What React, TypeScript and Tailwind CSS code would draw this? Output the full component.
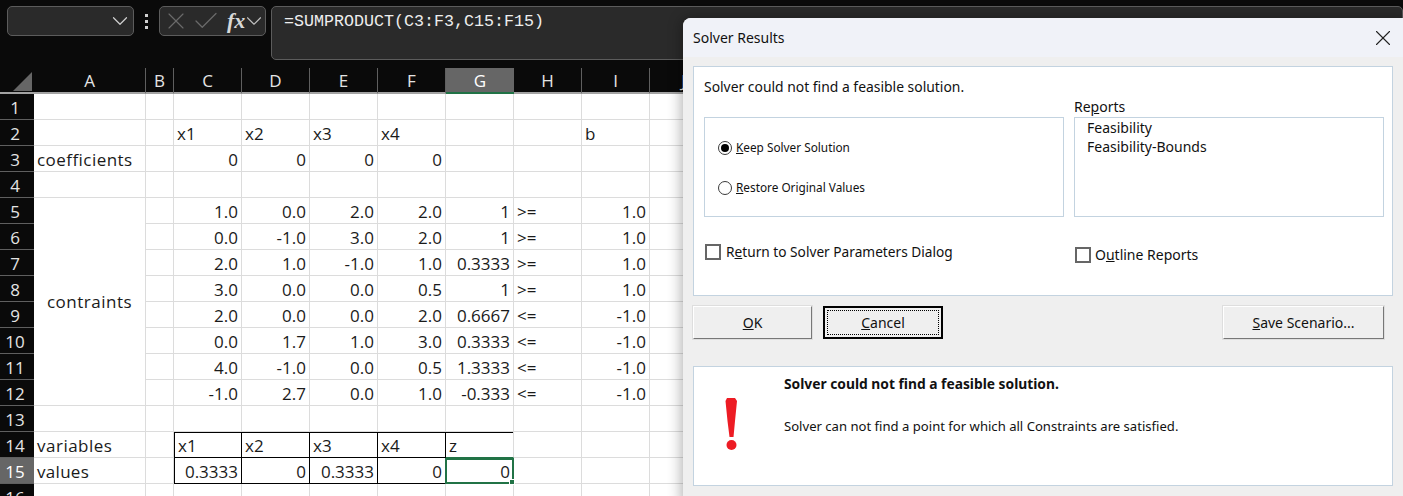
import React from 'react';
import { Check, ChevronDown, X } from 'lucide-react';

const columns = ['A', 'B', 'C', 'D', 'E', 'F', 'G', 'H', 'I', 'J'];

// constraint rows: C..G values, sign, b
const constraints = [
  ['1.0', '0.0', '2.0', '2.0', '1', '>=', '1.0'],
  ['0.0', '-1.0', '3.0', '2.0', '1', '>=', '1.0'],
  ['2.0', '1.0', '-1.0', '1.0', '0.3333', '>=', '1.0'],
  ['3.0', '0.0', '0.0', '0.5', '1', '>=', '1.0'],
  ['2.0', '0.0', '0.0', '2.0', '0.6667', '<=', '-1.0'],
  ['0.0', '1.7', '1.0', '3.0', '0.3333', '<=', '-1.0'],
  ['4.0', '-1.0', '0.0', '0.5', '1.3333', '<=', '-1.0'],
  ['-1.0', '2.7', '0.0', '1.0', '-0.333', '<=', '-1.0'],
];

const Cell: React.FC<{ v?: string; right?: boolean; className?: string }> = ({ v, right, className = '' }) => (
  <div
    className={`h-[26px] min-w-0 border-r border-b border-[#dcdcdc] whitespace-nowrap overflow-hidden leading-[27px] text-[17px] text-[#1a1a1a] ${right ? 'text-right pr-[3px]' : 'pl-[3px]'} ${className}`}
  >
    {v}
  </div>
);

const RowHead: React.FC<{ n: number; active?: boolean }> = ({ n, active }) => (
  <div
    className={`h-[26px] border-b border-[#5f5f5f] pr-1 text-center leading-[27px] text-[17px] ${active ? 'bg-[#666666] text-white' : 'bg-[#0a0a0a] text-[#e4e4e4]'}`}
  >
    {n}
  </div>
);

const Blank: React.FC<{ n: number }> = ({ n }) => (
  <>
    {Array.from({ length: n }).map((_, i) => (
      <Cell key={i} />
    ))}
  </>
);

const Sheet = () => (
  <div className="grid grid-cols-[34px_112px_28px_repeat(8,68px)] w-[718px] bg-white" style={{ fontFamily: '"Open Sans", sans-serif' }}>
    {/* header row */}
    <div className="h-[26px] bg-[#0a0a0a] border-b-2 border-[#a3a3a3] flex items-end justify-end pr-[2px] pb-[1px]">
      <div className="w-0 h-0 border-l-[19px] border-l-transparent border-b-[19px] border-b-[#666666]" />
    </div>
    {columns.map((c) =>
      c === 'G' ? (
        <div key={c} className="h-[26px] bg-[#666666] border-b-2 border-[#217346] text-center text-white text-[17px] leading-[25px]">{c}</div>
      ) : (
        <div key={c} className="h-[26px] bg-[#0a0a0a] border-r border-b-2 border-r-[#5f5f5f] border-b-[#a3a3a3] text-center text-[#e4e4e4] text-[17px] leading-[25px]">{c}</div>
      )
    )}

    <RowHead n={1} />
    <Blank n={10} />

    <RowHead n={2} />
    <Cell /><Cell />
    <Cell v="x1" /><Cell v="x2" /><Cell v="x3" /><Cell v="x4" />
    <Cell /><Cell />
    <Cell v="b" />
    <Cell />

    <RowHead n={3} />
    <Cell v="coefficients" className="tracking-[0.45px]" />
    <Cell />
    <Cell v="0" right /><Cell v="0" right /><Cell v="0" right /><Cell v="0" right />
    <Blank n={4} />

    <RowHead n={4} />
    <Blank n={10} />

    {constraints.map((row, i) => (
      <React.Fragment key={i}>
        <RowHead n={5 + i} />
        {i === 0 && (
          <div className="row-span-8 border-r border-b border-[#dcdcdc] flex items-center justify-center text-[17px] tracking-[0.5px] text-[#1a1a1a]">contraints</div>
        )}
        <Cell />
        <Cell v={row[0]} right /><Cell v={row[1]} right /><Cell v={row[2]} right /><Cell v={row[3]} right />
        <Cell v={row[4]} right />
        <Cell v={row[5]} />
        <Cell v={row[6]} right />
        <Cell />
      </React.Fragment>
    ))}

    <RowHead n={13} />
    <Blank n={10} />

    <RowHead n={14} />
    <Cell v="variables" className="tracking-[0.5px]" />
    <Cell />
    <Cell v="x1" className="border-l border-l-black border-r-black border-b-black shadow-[inset_0_1px_0_#000]" />
    <Cell v="x2" className="border-r-black border-b-black shadow-[inset_0_1px_0_#000]" />
    <Cell v="x3" className="border-r-black border-b-black shadow-[inset_0_1px_0_#000]" />
    <Cell v="x4" className="border-r-black border-b-black shadow-[inset_0_1px_0_#000]" />
    <Cell v="z" className="border-b-[#217346] shadow-[inset_0_1px_0_#000]" />
    <Blank n={3} />

    <RowHead n={15} active />
    <Cell v="values" className="tracking-[0.3px]" />
    <Cell />
    <Cell v="0.3333" right className="border-l border-l-black border-r-black border-b-black" />
    <Cell v="0" right className="border-r-black border-b-black" />
    <Cell v="0.3333" right className="border-r-black border-b-black" />
    <Cell v="0" right className="border-r-black border-b-black" />
    <div className="relative h-[26px] border-2 border-[#217346] -ml-px text-right pr-[2px] leading-[23px] text-[17px] text-[#1a1a1a]">
      0
      <div className="absolute -right-[3px] -bottom-[3px] w-[6px] h-[6px] bg-[#217346] border border-white" />
    </div>
    <Blank n={3} />

    <RowHead n={16} />
    <Blank n={10} />
  </div>
);

const FormulaBar = () => (
  <div className="h-[68px] bg-[#0a0a0a] flex items-start pt-[6px] pl-[7px] gap-[5px] overflow-hidden">
    <div className="w-[127px] h-[30px] shrink-0 bg-[#2a2a2a] border border-[#5c5c5c] rounded-[5px] flex items-center justify-end">
      <ChevronDown className="w-[26px] h-[26px] text-[#d0d0d0]" strokeWidth={1.1} />
    </div>
    <div className="w-[15px] h-[30px] shrink-0 flex flex-col items-center justify-center gap-[3px]">
      <span className="w-[3px] h-[3px] bg-[#d0d0d0]" />
      <span className="w-[3px] h-[3px] bg-[#d0d0d0]" />
      <span className="w-[3px] h-[3px] bg-[#d0d0d0]" />
    </div>
    <div className="w-[107px] h-[30px] shrink-0 bg-[#2a2a2a] border border-[#5c5c5c] rounded-[5px] flex items-center overflow-hidden">
      <X className="w-[28px] h-[28px] ml-[2px] shrink-0 text-[#6a6a6a]" strokeWidth={1} />
      <Check className="w-[30px] h-[30px] ml-px shrink-0 text-[#6a6a6a]" strokeWidth={1} />
      <span className="ml-[6px] w-[22px] text-[#d8d8d8] text-[22px] font-bold italic leading-none" style={{ fontFamily: '"Liberation Serif", serif' }}>fx</span>
      <ChevronDown className="w-[26px] h-[26px] -ml-[4px] shrink-0 text-[#c0c0c0]" strokeWidth={1} />
    </div>
    <div className="flex-1 h-[54px] bg-[#2a2a2a] border border-[#5c5c5c] rounded-[5px] pl-[12px] pt-[3px] text-[#eeeeee] text-[16.67px] leading-[24px]" style={{ fontFamily: '"Liberation Mono", monospace' }}>
      =SUMPRODUCT(C3:F3,C15:F15)
    </div>
  </div>
);

const Radio: React.FC<{ on?: boolean }> = ({ on }) => (
  <span className="w-[14px] h-[14px] shrink-0 rounded-full border-[1.5px] border-[#3a3a3a] bg-white flex items-center justify-center">
    {on && <span className="w-[8px] h-[8px] rounded-full bg-black" />}
  </span>
);

const Checkbox = () => <span className="w-[16px] h-[16px] shrink-0 border-2 border-[#666666] bg-white" />;

const Btn: React.FC<{ width: string; focus?: boolean; children: React.ReactNode }> = ({ width, focus, children }) => (
  <div
    className={`${width} h-[33px] flex items-center justify-center text-[14px] text-[#111] ${
      focus
        ? 'border-2 border-black bg-[#efefef] outline-1 outline-dotted outline-black -outline-offset-[5px]'
        : 'border border-t-white border-l-white border-r-[#777] border-b-[#777] bg-[#efefef] shadow-[0_0_0_1px_#dedede]'
    }`}
  >
    <span>{children}</span>
  </div>
);

const SolverDialog = () => (
  <div
    className="absolute left-[683px] top-[18px] w-[730px] h-[490px] rounded-[8px] bg-[#efefef] shadow-[-2px_0_14px_rgba(0,0,0,0.3)] overflow-hidden text-[#111]"
    style={{ fontFamily: '"Noto Sans", sans-serif' }}
  >
    <div className="h-[39px] bg-[#f0f2f8] flex items-center justify-between pl-[10px] pr-[17px]">
      <span className="text-[14px]">Solver Results</span>
      <X className="w-[26px] h-[26px] text-[#222]" strokeWidth={1} />
    </div>

    <div className="pt-[9px] pl-[10px] w-[710px]">
      {/* upper group */}
      <div className="h-[230px] bg-white border border-[#c3d3e0] pl-[10px] pr-[8px]">
        <div className="pt-[9px] text-[13.9px] leading-[22px]">Solver could not find a feasible solution.</div>
        <div className="flex gap-[10px]">
          <div className="w-[360px] shrink-0 pt-[19px]">
            <div className="h-[100px] border border-[#c3d3e0] flex flex-col justify-center gap-[25px] pl-[13px] pt-[2px] text-[11.8px]">
              <label className="flex items-center gap-[4px] h-[15px]"><Radio on /><span><u>K</u>eep Solver Solution</span></label>
              <label className="flex items-center gap-[4px] h-[15px]"><Radio /><span><u>R</u>estore Original Values</span></label>
            </div>
            <div className="flex items-center gap-[5px] mt-[25px] pl-[1px] text-[13.7px]"><Checkbox /><span>R<u>e</u>turn to Solver Parameters Dialog</span></div>
          </div>
          <div className="flex-1">
            <div className="text-[14px] leading-[18px] mb-px">Re<u>p</u>orts</div>
            <div className="h-[100px] border border-[#c3d3e0] pl-[12px] text-[14px] leading-[19px]">
              <div>Feasibility</div>
              <div>Feasibility-Bounds</div>
            </div>
            <div className="flex items-center gap-[4px] mt-[27px] pl-[1px] text-[14px]"><Checkbox /><span>O<u>u</u>tline Reports</span></div>
          </div>
        </div>
      </div>

      {/* buttons */}
      <div className="flex mt-[10px] pr-[9px]">
        <Btn width="w-[119px]"><u>O</u>K</Btn>
        <div className="w-[11px]" />
        <Btn width="w-[120px]" focus><u>C</u>ancel</Btn>
        <div className="flex-1" />
        <Btn width="w-[161px]"><u>S</u>ave Scenario...</Btn>
      </div>

      {/* message panel */}
      <div className="mt-[27px] h-[120px] bg-white border border-[#c3d3e0] flex">
        <div className="w-[90px] shrink-0 pl-[31px] pt-[31px]">
          <svg width="14" height="53" viewBox="0 0 14 53">
            <path d="M2 0 L10 0 L12 3 L10 23 L8.5 39 L4.5 39 L2.5 23 L0.5 3 Z" fill="#ed1c24" />
            <circle cx="6.5" cy="47" r="5" fill="#ed1c24" />
          </svg>
        </div>
        <div className="pt-[8px]">
          <div className="text-[13.8px] font-bold leading-[18px]">Solver could not find a feasible solution.</div>
          <div className="mt-[24px] text-[13.1px] leading-[18px]">Solver can not find a point for which all Constraints are satisfied.</div>
        </div>
      </div>
    </div>
  </div>
);

export default function App() {
  return (
    <div className="relative w-[1403px] h-[496px] overflow-hidden bg-white">
      <FormulaBar />
      <Sheet />
      <SolverDialog />
    </div>
  );
}
